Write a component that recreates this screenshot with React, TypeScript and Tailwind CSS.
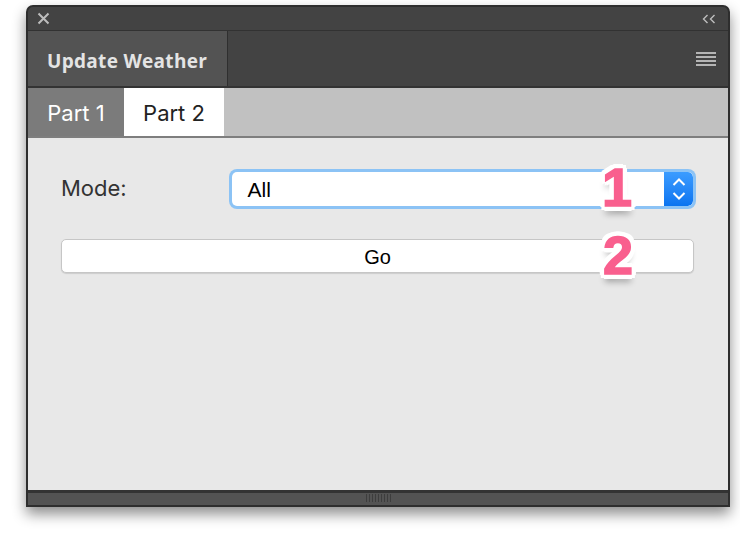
import { useState } from "react";

const badge =
  "absolute font-['Liberation_Sans',sans-serif] font-bold text-[54px] leading-none text-[#f95f8e] [-webkit-text-stroke:1.5px_#f95f8e] [text-shadow:3px_0_0_#fff,-3px_0_0_#fff,0_3px_0_#fff,0_-3px_0_#fff,2px_2px_0_#fff,-2px_2px_0_#fff,2px_-2px_0_#fff,-2px_-2px_0_#fff,5px_1px_0_#fff,-5px_1px_0_#fff,5px_-1px_0_#fff,-5px_-1px_0_#fff,1px_5px_0_#fff,-1px_5px_0_#fff,1px_-5px_0_#fff,-1px_-5px_0_#fff,4px_4px_0_#fff,-4px_4px_0_#fff,4px_-4px_0_#fff,-4px_-4px_0_#fff,0_8px_6px_rgba(0,0,0,0.3)]";

export default function App() {
  const [tab, setTab] = useState(2);
  const [mode, setMode] = useState("All");

  return (
    <div className="w-[740px] h-[538px] bg-white pt-[5px] pl-[26px] font-['Open_Sans',sans-serif]">
      <div className="w-[704px] h-[502px] border-2 border-[#2e2e2e] rounded-t-[7px] bg-[#434343] flex flex-col shadow-[0_7px_14px_rgba(0,0,0,0.45)] overflow-hidden">
        {/* title bar */}
        <div className="h-[24px] flex items-center justify-between px-[9px] border-b border-[#323232]">
          <svg width="13" height="13" viewBox="0 0 13 13" aria-hidden>
            <path d="M1.5 1.5l10 10M11.5 1.5l-10 10" stroke="#bdbdbd" strokeWidth="2" />
          </svg>
          <svg width="14" height="10" viewBox="0 0 14 10" aria-hidden className="mr-[3px]">
            <path d="M5.5 1L1.5 5l4 4M12.5 1l-4 4 4 4" stroke="#bdbdbd" strokeWidth="1.4" fill="none" />
          </svg>
        </div>

        {/* panel tab header */}
        <div className="h-[57px] flex border-b-2 border-[#333]">
          <div className="w-[200px] bg-[#535353] border-r border-[#2f2f2f] flex items-center pl-[19px] pt-[5px] text-[19px] font-bold text-[#e4e4e4] tracking-[0.3px]">
            Update Weather
          </div>
          <div className="flex-1 flex items-center justify-end pr-[12px]">
            <div className="flex flex-col gap-[2px]">
              <div className="w-[20px] h-[2px] bg-[#b5b5b5]" />
              <div className="w-[20px] h-[2px] bg-[#b5b5b5]" />
              <div className="w-[20px] h-[2px] bg-[#b5b5b5]" />
              <div className="w-[20px] h-[2px] bg-[#b5b5b5]" />
            </div>
          </div>
        </div>

        {/* sub tabs */}
        <div className="h-[50px] flex bg-[#c1c1c1] border-b-2 border-[#7e7e7e] font-['Inter',sans-serif] text-[22px]">
          <button
            onClick={() => setTab(1)}
            className={`w-[96px] pt-[3px] ${tab === 1 ? "bg-white text-[#222]" : "bg-[#7b7b7b] text-white"}`}
          >
            Part 1
          </button>
          <button
            onClick={() => setTab(2)}
            className={`w-[100px] pt-[3px] ${tab === 2 ? "bg-white text-[#222]" : "bg-[#7b7b7b] text-white"}`}
          >
            Part 2
          </button>
        </div>

        {/* content */}
        <div className="relative flex-1 bg-[#e8e8e8] pt-[31px] pl-[33px] pr-[32px] font-['Liberation_Sans',sans-serif]">
          <div className="flex items-center">
            <span className="w-[169px] text-[22px] text-[#333] font-['Inter',sans-serif] -mt-[2px]">Mode:</span>
            <div className="w-[468px] h-[40px] rounded-[8px] bg-[#8cc3f5] p-[3px]">
              <div className="h-full flex rounded-[5px] bg-white overflow-hidden">
                <div className="flex-1 flex items-center pl-[15px] pt-[2px] text-[21px] text-black">{mode}</div>
                <button
                  onClick={() => setMode(mode === "All" ? "Some" : "All")}
                  className="w-[29px] flex items-center justify-center bg-gradient-to-b from-[#3b9cff] to-[#0a74f0] rounded-r-[5px]"
                >
                  <svg width="16" height="26" viewBox="0 0 16 26" aria-hidden>
                    <path d="M2.5 9L8 3.5 13.5 9M2.5 17L8 22.5 13.5 17" stroke="#fff" strokeWidth="2" fill="none" />
                  </svg>
                </button>
              </div>
            </div>
          </div>

          <button className="mt-[30px] w-[633px] h-[34px] rounded-[5px] bg-white border border-[#c6c6c6] shadow-[0_1px_1px_rgba(0,0,0,0.12)] pt-[2px] text-[20px] text-black">
            Go
          </button>

          <span className={`${badge} left-[574px] top-[22px]`}>1</span>
          <span className={`${badge} left-[575px] top-[90px]`}>2</span>
        </div>

        {/* bottom grip */}
        <div className="h-[15px] border-t-[3px] border-[#333] bg-[#535353] flex justify-center">
          <div className="mt-[1px] flex gap-[2px]">
            {Array.from({ length: 9 }).map((_, i) => (
              <div key={i} className="w-[1px] h-[8px] bg-[#3d3d3d]" />
            ))}
          </div>
        </div>
      </div>
    </div>
  );
}
